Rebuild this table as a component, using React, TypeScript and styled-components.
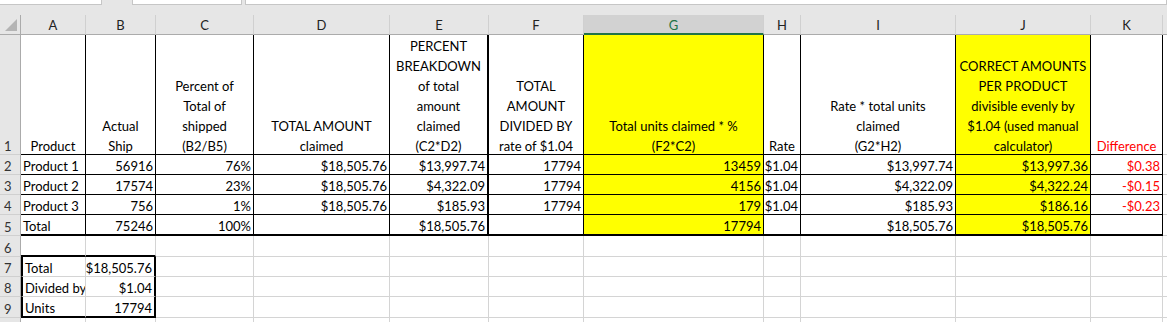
import React from "react";
import styled, { createGlobalStyle } from "styled-components";

const GlobalStyle = createGlobalStyle`
  html, body { margin: 0; padding: 0; background: #ffffff; overflow: hidden; }
  body { font-family: Lato, "Open Sans", "Liberation Sans", sans-serif; font-size: 13px; color: #000; }
`;

type B = "g" | "t" | "k" | "n";
const border = (b: B | undefined) =>
  b === "k" ? "2px solid #000" : b === "t" ? "1px solid #000" : b === "n" ? "none" : "1px solid #d4d4d4";

const Frame = styled.div`
  width: 1167px;
  height: 322px;
  overflow: hidden;
  background: #e6e6e6;
`;

const TopStrip = styled.div`
  height: 15px;
  display: flex;
  align-items: flex-start;
  background: #e6e6e6;
`;

const BarBox = styled.div<{ $w?: number; $gap?: number }>`
  box-sizing: border-box;
  height: 5px;
  background: #ffffff;
  border-bottom: 1px solid #c6c6c6;
  border-right: 1px solid #c6c6c6;
  border-left: ${(p) => (p.$gap ? "1px solid #c6c6c6" : "none")};
  margin-left: ${(p) => p.$gap ?? 0}px;
  width: ${(p) => (p.$w ? `${p.$w}px` : "auto")};
  flex: ${(p) => (p.$w ? "none" : "1")};
`;

const Sheet = styled.div`
  display: grid;
  grid-template-columns: 21px 65px 70px 98px 136px 99px 95px 180px 37px 155px 135px 72px 1fr;
  grid-template-rows: 20px 120px 20px 20px 20px 21px 21px 20px 20px 21px 20px;
  background: #ffffff;
`;

const Corner = styled.div`
  box-sizing: border-box;
  background: #e6e6e6;
  border-right: 1px solid #ababab;
  border-bottom: 1px solid #ababab;
  display: flex;
  align-items: flex-end;
  justify-content: flex-end;
  padding: 0 3px 3px 0;
`;

const ColHead = styled.div<{ $active?: boolean }>`
  box-sizing: border-box;
  background: ${(p) => (p.$active ? "#d2d2d2" : "#e6e6e6")};
  color: ${(p) => (p.$active ? "#217346" : "#222")};
  border-right: 1px solid #d0d0d0;
  border-bottom: ${(p) => (p.$active ? "2px solid #217346" : "1px solid #ababab")};
  display: flex;
  align-items: center;
  justify-content: center;
  line-height: 20px;
  padding-top: 1px;
`;

const RowHead = styled.div`
  box-sizing: border-box;
  background: #e6e6e6;
  color: #333;
  border-right: 1px solid #ababab;
  border-bottom: 1px solid #d0d0d0;
  display: flex;
  flex-direction: column;
  justify-content: flex-end;
  padding-left: 4px;
  line-height: 20px;
  overflow: hidden;
`;

type Align = "l" | "r" | "c";

const Cell = styled.div<{ $a: Align; $bg?: string; $c?: string; $r?: B; $b?: B; $l?: B }>`
  box-sizing: border-box;
  display: flex;
  flex-direction: column;
  justify-content: flex-end;
  align-items: ${(p) => (p.$a === "r" ? "flex-end" : p.$a === "c" ? "center" : "flex-start")};
  text-align: ${(p) => (p.$a === "r" ? "right" : p.$a === "c" ? "center" : "left")};
  padding: 0 2px;
  overflow: hidden;
  white-space: nowrap;
  line-height: 20px;
  background: ${(p) => p.$bg ?? "#ffffff"};
  color: ${(p) => p.$c ?? "#000"};
  border-right: ${(p) => border(p.$r)};
  border-bottom: ${(p) => border(p.$b)};
  border-left: ${(p) => (p.$l ? border(p.$l) : "none")};
`;

const Text = styled.span`
  display: block;
  margin-bottom: -2px;
`;

const Tri = () => (
  <svg width="12" height="12" viewBox="0 0 12 12">
    <polygon points="0,12 12,12 12,0" fill="#b4b4b4" />
  </svg>
);

type Spec = { t?: string; a?: Align; bg?: string; c?: string; r?: B; b?: B; l?: B };

const Y = "#ffff00";
const RED = "#ff0000";

const header: Spec[] = [
  { t: "Product", a: "c" },
  { t: "Actual\nShip", a: "c" },
  { t: "Percent of\nTotal of\nshipped\n(B2/B5)", a: "c" },
  { t: "TOTAL AMOUNT\nclaimed", a: "c" },
  { t: "PERCENT\nBREAKDOWN\nof total\namount\nclaimed\n(C2*D2)", a: "c", r: "k" },
  { t: "TOTAL\nAMOUNT\nDIVIDED BY\nrate of $1.04", a: "c" },
  { t: "Total units claimed * %\n(F2*C2)", a: "c", bg: Y },
  { t: "Rate", a: "c" },
  { t: "Rate * total units\nclaimed\n(G2*H2)", a: "c" },
  { t: "CORRECT AMOUNTS\nPER PRODUCT\ndivisible evenly by\n$1.04 (used manual\ncalculator)", a: "c", bg: Y },
  { t: "Difference", a: "c", c: RED },
];

const dataRow = (v: string[]): Spec[] => [
  { t: v[0], a: "l" },
  { t: v[1], a: "r" },
  { t: v[2], a: "r" },
  { t: v[3], a: "r" },
  { t: v[4], a: "r", r: "k" },
  { t: v[5], a: "r" },
  { t: v[6], a: "r", bg: Y },
  { t: v[7], a: "r" },
  { t: v[8], a: "r" },
  { t: v[9], a: "r", bg: Y },
  { t: v[10], a: "r", c: RED },
];

const table: Spec[][] = [
  header,
  dataRow(["Product 1", "56916", "76%", "$18,505.76", "$13,997.74", "17794", "13459", "$1.04", "$13,997.74", "$13,997.36", "$0.38"]),
  dataRow(["Product 2", "17574", "23%", "$18,505.76", "$4,322.09", "17794", "4156", "$1.04", "$4,322.09", "$4,322.24", "-$0.15"]),
  dataRow(["Product 3", "756", "1%", "$18,505.76", "$185.93", "17794", "179", "$1.04", "$185.93", "$186.16", "-$0.23"]),
  dataRow(["Total", "75246", "100%", "", "$18,505.76", "", "17794", "", "$18,505.76", "$18,505.76", ""]).map((s) => ({ ...s, b: "k" as B })),
];

const blank = (): Spec[] => Array.from({ length: 12 }, () => ({ a: "l" as Align, r: "g" as B, b: "g" as B }));

const row6 = blank();
row6[0].b = "k";
row6[1].b = "k";

const boxRow = (label: string, value: string, last: boolean): Spec[] => {
  const r = blank();
  r[0] = { t: label, a: "l", l: "k", r: "g", b: last ? "k" : "g" };
  r[1] = { t: value, a: "r", r: "k", b: last ? "k" : "g" };
  return r;
};

const lower: Spec[][] = [
  row6,
  boxRow("Total", "$18,505.76", false),
  boxRow("Divided by", "$1.04", false),
  boxRow("Units", "17794", true),
  blank(),
];

const letters = ["A", "B", "C", "D", "E", "F", "G", "H", "I", "J", "K", ""];

const renderText = (t?: string) =>
  t ? (
    <Text>
      {t.split("\n").map((line, i, arr) => (
        <React.Fragment key={i}>
          {line}
          {i < arr.length - 1 && <br />}
        </React.Fragment>
      ))}
    </Text>
  ) : null;

export default function App() {
  const top = table.map((row) => [...row.map((s) => ({ r: "t" as B, b: "t" as B, ...s })), { a: "l" as Align, r: "g" as B, b: "g" as B }]);
  const all = [...top, ...lower];
  const visibleRows = 9;
  return (
    <>
      <GlobalStyle />
      <Frame>
        <TopStrip>
          <BarBox $w={102} />
          <BarBox $w={110} $gap={30} />
          <BarBox $gap={3} />
        </TopStrip>
        <Sheet>
          <Corner>
            <Tri />
          </Corner>
          {letters.map((l, i) => (
            <ColHead key={i} $active={l === "G"}>
              {l}
            </ColHead>
          ))}
          {all.map((row, ri) => (
            <React.Fragment key={ri}>
              <RowHead>{ri < visibleRows && <Text>{ri + 1}</Text>}</RowHead>
              {row.map((s, ci) => (
                <Cell key={ci} $a={s.a ?? "l"} $bg={s.bg} $c={s.c} $r={s.r} $b={s.b} $l={s.l}>
                  {renderText(s.t)}
                </Cell>
              ))}
            </React.Fragment>
          ))}
        </Sheet>
      </Frame>
    </>
  );
}
